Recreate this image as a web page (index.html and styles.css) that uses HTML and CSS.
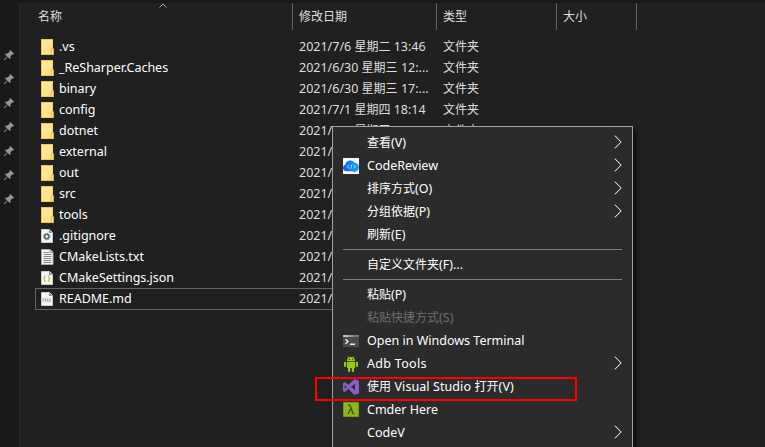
FILE: index.html
```html
<!DOCTYPE html>
<html lang="zh-CN">
<head>
<meta charset="utf-8">
<title>Explorer</title>
<link rel="stylesheet" href="styles.css">
</head>
<body>
<svg width="0" height="0" class="defs">
  <defs>
    <linearGradient id="fold" x1="0" y1="0" x2="1" y2="1"><stop offset="0" stop-color="#ffe9a0"/><stop offset="1" stop-color="#ffe083"/></linearGradient>
    <linearGradient id="cloudfill" x1="0" y1="0" x2="1" y2="0"><stop offset="0" stop-color="#0a62ec"/><stop offset="1" stop-color="#18a5f2"/></linearGradient>
    <symbol id="pin" viewBox="0 0 10 10"><path d="M6.3 0 10 3.7 9.2 4.5 8.4 4.3 6.5 6.2 6.6 8.2 5.8 9 3.6 6.8 0.7 10 0 10 0 9.3 3.2 6.4 1 4.2 1.8 3.4 3.8 3.5 5.7 1.6 5.5.8Z" fill="#8f9ba3"/></symbol>
    <symbol id="folder" viewBox="0 0 13 16"><path d="M0 0h12v16H0z" fill="#efc74d"/><path d="M1 1h10.500v14H1z" fill="url(#fold)"/><path d="M10.500 9.500h2V16H10z" fill="#ffe48e" stroke="#dfb43c" stroke-width=".8"/></symbol>
    <symbol id="page" viewBox="0 0 12 14"><path d="M.5.500h8l3 3v10H.500z" fill="#f4f5f5" stroke="#c9cccd"/><path d="M8 .500v3.500h3.500z" fill="#8d9193"/></symbol>
    <symbol id="arrow" viewBox="0 0 8 14"><path d="M1.400.700 7.500 7 1.400 13.300" fill="none" stroke="#c58b3c" stroke-width=".8"/><path d="M.3.500 1.600 1.600M.3 13.500l1.300-1.100" stroke="#4f98d8"/><path d="M.9.900 6.900 7 .9 13.100" fill="none" stroke="#dceaf0" stroke-width=".9"/></symbol>
  </defs>
</svg>
<div class="window">
  <aside class="pins">
    <svg><use href="#pin"/></svg><svg><use href="#pin"/></svg><svg><use href="#pin"/></svg><svg><use href="#pin"/></svg><svg><use href="#pin"/></svg><svg><use href="#pin"/></svg><svg><use href="#pin"/></svg>
  </aside>
  <main class="files">
    <header class="head">
      <span class="col-name">名称<svg class="sort" viewBox="0 0 8 5"><path d="M.5 4.500 4 1 7.500 4.500" fill="none" stroke="#a0a0a0"/></svg></span>
      <span class="col-date">修改日期</span><span class="col-type">类型</span><span class="col-size">大小</span>
    </header>
    <div class="row"><svg class="folder"><use href="#folder"/></svg><span class="name">.vs</span><span class="date">2021/7/6 <b>星期二</b> 13:46</span><span class="type">文件夹</span></div>
    <div class="row"><svg class="folder"><use href="#folder"/></svg><span class="name">_ReSharper.Caches</span><span class="date">2021/6/30 <b>星期三</b> 12:...</span><span class="type">文件夹</span></div>
    <div class="row"><svg class="folder"><use href="#folder"/></svg><span class="name">binary</span><span class="date">2021/6/30 <b>星期三</b> 17:...</span><span class="type">文件夹</span></div>
    <div class="row"><svg class="folder"><use href="#folder"/></svg><span class="name">config</span><span class="date">2021/7/1 <b>星期四</b> 18:14</span><span class="type">文件夹</span></div>
    <div class="row"><svg class="folder"><use href="#folder"/></svg><span class="name">dotnet</span><span class="date">2021/ <b class="gap">星期三</b></span><span class="type">文件夹</span></div>
    <div class="row"><svg class="folder"><use href="#folder"/></svg><span class="name">external</span><span class="date">2021/</span></div>
    <div class="row"><svg class="folder"><use href="#folder"/></svg><span class="name">out</span><span class="date">2021/</span></div>
    <div class="row"><svg class="folder"><use href="#folder"/></svg><span class="name">src</span><span class="date">2021/</span></div>
    <div class="row"><svg class="folder"><use href="#folder"/></svg><span class="name">tools</span><span class="date">2021/</span></div>
    <div class="row"><svg class="doc" viewBox="0 0 12 14"><use href="#page"/><circle cx="5.700" cy="7.500" r="2.200" fill="none" stroke="#53666e" stroke-width="1.500"/><circle cx="5.700" cy="7.500" r="3.200" fill="none" stroke="#53666e" stroke-width="1" stroke-dasharray="1.200 1.310"/></svg><span class="name">.gitignore</span><span class="date">2021/</span></div>
    <div class="row"><svg class="doc text" viewBox="0 0 13 16"><path d="M.5.500h8.500l3 3v12H.500z" fill="#f8f8f8" stroke="#aaa"/><path d="M9 .500v3h3" fill="#ddd" stroke="#999"/><path d="M2.500 3.500H8M2.500 5.500h8M2.500 7.500h8M2.500 9.500h8M2.500 11.500h8M2.500 13.500h8" stroke="#858585"/></svg><span class="name">CMakeLists.txt</span><span class="date">2021/</span></div>
    <div class="row"><svg class="doc" viewBox="0 0 12 14"><use href="#page"/><path d="M4.500 4.500Q3.500 4.500 3.500 5.500V7L2.700 7.500 3.500 8v1.500q0 1 1 1M7 4.500q1 0 1 1V7l.8.500L8 8v1.500q0 1-1 1" fill="none" stroke="#bbc13a" stroke-width="1.100"/></svg><span class="name">CMakeSettings.json</span><span class="date">2021/</span></div>
    <div class="row selected"><svg class="doc" viewBox="0 0 12 14"><use href="#page"/><path d="M2 10V6.500L3.300 8 4.600 6.500V10M6.300 6.500v3.300M5.800 8H8M8.800 6v4M7.600 8.500 8.800 10 10 8.500" fill="none" stroke="#aaa"/></svg><span class="name">README.md</span><span class="date">2021/</span></div>
  </main>
</div>

<nav class="menu">
  <div class="item"><i></i><span class="label"><b>查看</b>(V)</span><svg class="arrow"><use href="#arrow"/></svg></div>
  <div class="item"><i><svg viewBox="0 0 16 16"><path d="M0 0h16v16H0z" fill="#f5f7f8"/><path d="M3.300 13.200a3.500 3.500 0 0 1-.9-6.800A5.300 5.300 0 0 1 12 5a4.200 4.200 0 0 1 1 8.200l-1.300 1.200-1.500-1.200z" fill="url(#cloudfill)"/><path d="M6 7 4.300 8.700 6 10.400M10.500 7l1.700 1.700-1.700 1.700M8.900 6.500l-1.300 4.400" fill="none" stroke="#e6f5ff" stroke-width=".8"/></svg></i><span class="label">CodeReview</span><svg class="arrow"><use href="#arrow"/></svg></div>
  <div class="item"><i></i><span class="label"><b>排序方式</b>(O)</span><svg class="arrow"><use href="#arrow"/></svg></div>
  <div class="item"><i></i><span class="label"><b>分组依据</b>(P)</span><svg class="arrow"><use href="#arrow"/></svg></div>
  <div class="item"><i></i><span class="label"><b>刷新</b>(E)</span></div>
  <hr>
  <div class="item"><i></i><span class="label"><b>自定义文件夹</b>(F)...</span></div>
  <hr>
  <div class="item"><i></i><span class="label"><b>粘贴</b>(P)</span></div>
  <div class="item disabled"><i></i><span class="label"><b>粘贴快捷方式</b>(S)</span></div>
  <div class="item"><i><svg viewBox="0 0 16 16"><path d="M0 2h16v12H0z" fill="#494b4c"/><path d="M0 2h5v2H0z" fill="#bfc1c2"/><path d="M5 2h5v2H5z" fill="#98999a"/><path d="M10 2h6v2h-6z" fill="#777"/><path d="M2.500 6.200 5 8.500 2.500 10.800M7 11.200h5" fill="none" stroke="#eee" stroke-width="1.400"/></svg></i><span class="label">Open in Windows Terminal</span></div>
  <div class="item"><i><svg viewBox="0 0 16 16"><g fill="#99cc08"><path d="M4 5a4 4 0 0 1 8 0zM4 5.700h8V12H4z"/><rect x="1" y="5.700" width="2.200" height="5.300" rx="1"/><rect x="12.800" y="5.700" width="2.200" height="5.300" rx="1"/><rect x="5" y="10.500" width="2.200" height="5.500" rx="1"/><rect x="8.800" y="10.500" width="2.200" height="5.500" rx="1"/></g><path d="m5 .2 1 1.600M11 .2l-1 1.600" stroke="#99cc08" stroke-width=".8"/><path d="M6 3h.9v.9H6zM9.200 3h.9v.9h-.9z" fill="#293117"/></svg></i><span class="label adb">Adb Tools</span><svg class="arrow"><use href="#arrow"/></svg></div>
  <div class="item"><i><svg viewBox="0 0 16 16"><path fill-rule="evenodd" d="M0 4 2 3l3.300 3L11.500 0 16 1.800v12.400L11.500 16 5.300 10 2 13 0 12zM1.700 6v4l2-2zM12 5 8 8l4 3z" fill="#865fc5"/></svg></i><span class="label vs"><b>使用</b> Visual Studio <b>打开</b>(V)</span></div>
  <div class="item"><i><svg viewBox="0 0 16 16"><path d="M.5.500h15v14H.500z" fill="#8eb51c" stroke="#779719"/><path d="M5 3q2-.4 2.600 1.500l2 6q.4 1.400 1.800 1M8 6.300 5 12" fill="none" stroke="#37480e" stroke-width="1.200"/></svg></i><span class="label">Cmder Here</span></div>
  <div class="item"><i></i><span class="label">CodeV</span><svg class="arrow"><use href="#arrow"/></svg></div>
</nav>
<div class="highlight"></div>
</body>
</html>
```

FILE: styles.css
```css
* { box-sizing: border-box; }
body {
  margin: 0;
  width: 765px;
  height: 447px;
  overflow: hidden;
  position: relative;
  background: #191919;
  color: #f2f2f2;
  font: 12.5px/20px "Noto Sans", "Noto Sans CJK SC", sans-serif;
}
.defs { position: absolute; }
b { font-weight: 400; font-size: 12px; }
.window { display: flex; height: 447px; padding-top: 3px; }
.pins {
  width: 20px;
  padding: 47px 0 0 4px;
  display: flex;
  flex-direction: column;
  gap: 14px;
  border-right: 1px solid #2b2b2b;
}
.pins svg { width: 10px; height: 10px; flex: none; }
.files { flex: 1; background: #202020; }
.head { display: flex; height: 33px; font-size: 12px; line-height: 28px; color: #dedede; }
.head span { height: 27px; border-right: 1px solid #636363; position: relative; }
.col-name { width: 273px; padding-left: 18px; }
.col-date { width: 144px; padding-left: 6px; }
.col-type { width: 120px; padding-left: 6px; }
.col-size { width: 80px; padding-left: 6px; }
.sort { position: absolute; left: 139px; top: 0; width: 8px; height: 5px; }
.row { display: flex; align-items: center; height: 21px; padding-left: 21px; }
.row.selected { margin-left: 15px; padding-left: 5px; width: 590px; height: 22px; border: 1px solid #636363; }
.folder { width: 13px; height: 16px; flex: none; margin-right: 5px; }
.doc { width: 12px; height: 14px; flex: none; margin-right: 6px; }
.doc.text { width: 13px; height: 16px; margin-right: 5px; }
.name { width: 240px; color: #fff; white-space: nowrap; letter-spacing: -.02px; }
.date { width: 144px; color: #dedede; white-space: nowrap; }
.date .gap { margin-left: 19px; }
.type { font-size: 12px; color: #dedede; }
.menu {
  position: absolute;
  left: 332px;
  top: 126px;
  width: 301px;
  height: 340px;
  padding: 4px 10px;
  background: #2b2b2b;
  border: 1px solid #a0a0a0;
  box-shadow: 4px 4px 4px rgba(0, 0, 0, .5);
}
.item { display: flex; align-items: center; height: 23px; color: #fff; }
.item i { width: 16px; height: 16px; margin-right: 8px; flex: none; }
.item i svg { display: block; width: 16px; height: 16px; }
.label { flex: 1; white-space: nowrap; }
.adb { letter-spacing: .3px; }
.vs { letter-spacing: .08px; }
.disabled { color: #6d6d6d; }
.arrow { width: 8px; height: 14px; margin-bottom: 2px; }
.menu hr { height: 1px; margin: 3px 0; border: 0; background: #808080; }
.highlight {
  position: absolute;
  left: 315px;
  top: 377px;
  width: 262px;
  height: 24px;
  border: 2px solid #f00;
}
```
